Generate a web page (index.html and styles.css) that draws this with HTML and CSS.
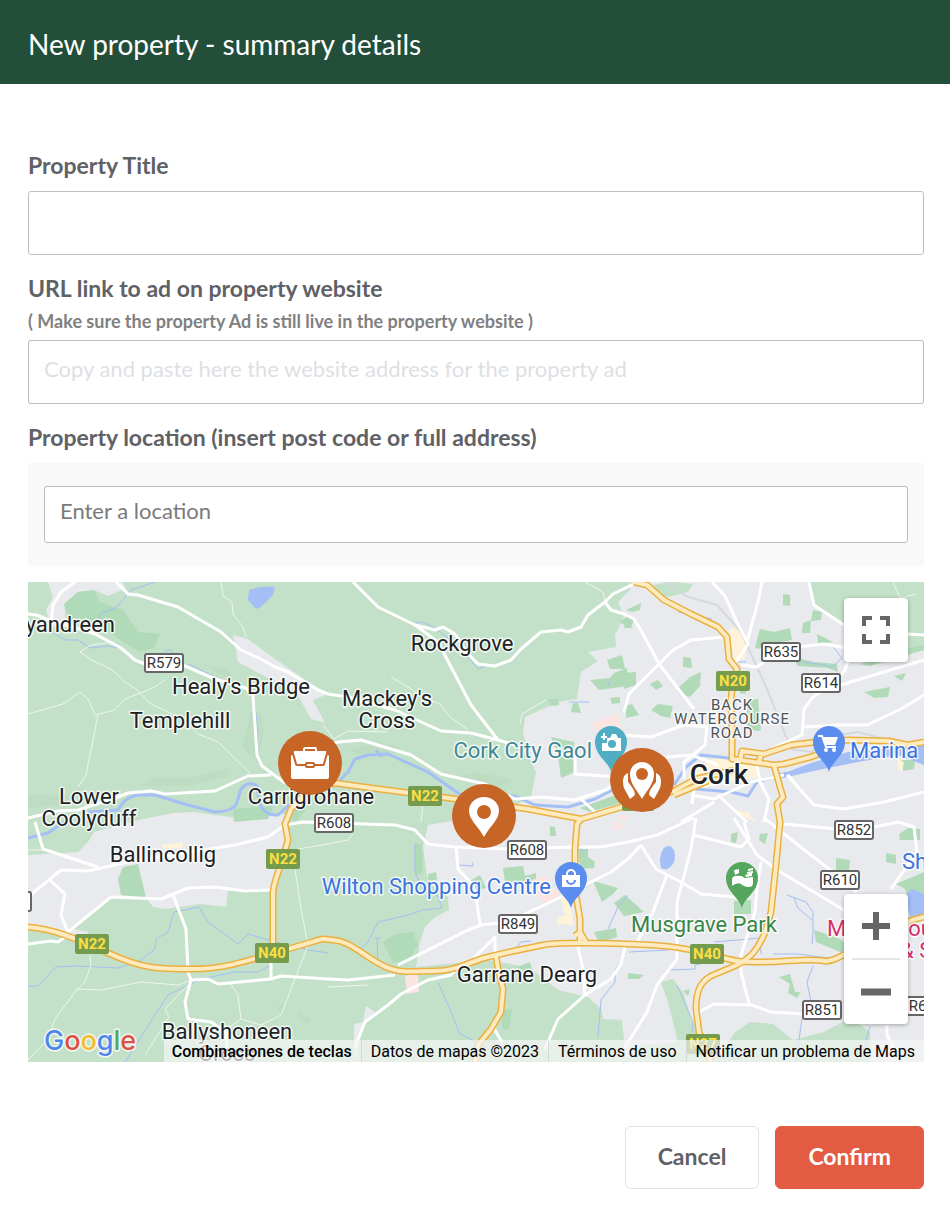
FILE: index.html
```html
<!DOCTYPE html>
<html lang="en">
<head>
  <meta charset="UTF-8">
  <meta name="viewport" content="width=device-width, initial-scale=1">
  <title>New property - summary details</title>
  <link rel="stylesheet" href="styles.css">
</head>
<body>
  <header class="header">
    <h1 class="title">New property - summary details</h1>
  </header>

  <form class="form">
    <div class="field">
      <label class="label" for="propertyTitle">Property Title</label>
      <input class="input" type="text" id="propertyTitle">
    </div>

    <div class="field">
      <label class="label label-hinted" for="propertyUrl">URL link to ad on property website</label>
      <p class="hint" id="urlHint">( Make sure the property Ad is still live in the property website )</p>
      <input class="input" type="text" id="propertyUrl" aria-describedby="urlHint" placeholder="Copy and paste here the website address for the property ad">
    </div>

    <div class="field">
      <label class="label" for="location">Property location (insert post code or full address)</label>
      <div class="location-box">
        <input class="input input-location" type="text" id="location" placeholder="Enter a location">
      </div>
    </div>

    <div class="map">
      <svg class="map-canvas" viewBox="0 0 896 480" preserveAspectRatio="xMidYMid slice">
        <defs>
          <path id="pin" d="M0 30C-2 20-16 14-16 0A16 16 0 0 1 16 0C16 14 2 20 0 30Z"/>
          <!-- main roads are stroked twice: casing, then fill -->
          <g id="highways">
            <path d="M0 345C25 347 45 355 80 371S130 387 163 387S215 380 260 367S290 357 305 358S330 369 350 381S385 389 407 389S440 380 460 375S500 366 515 363S570 361 600 362S650 364 680 372S710 380 735 380S780 376 796 379S850 345 896 335"/>
            <path d="M245 370L245 310C246 300 250 290 254 280L260 258L257 242L263 227L280 208L307 201L343 206L413 215L500 227L553 237L567 233L600 223L646 209L668 197L706 188"/>
            <path d="M553 237L549 242L547 267L547 307L552 337L552 361M547 354L552 350L558 360"/>
            <path d="M468 374L470 387L475 407L473 430L463 447L450 463L447 480"/>
            <path d="M606 0L619 3L636 18L663 32L690 45L699 55L701 77L709 87L705 100L703 117L704 147L704 177L746 183L756 182L783 175L800 168"/>
            <path d="M706 180L712 178L714 169L736 172L763 163L789 160L821 158L861 159L880 163L896 160M730 182L734 171M646 213L680 199"/>
            <path d="M746 183L752 205L755 215L749 222L752 240L748 283L743 330L736 353C728 370 722 376 709 383L683 394C672 400 668 410 668 427L671 450L683 480"/>
          </g>
        </defs>

        <!-- land -->
        <rect class="land" width="896" height="480"/>
        <g class="urban">
          <path d="M20 0L25 15L18 28L24 45L38 40L36 22L50 10L66 8L80 14L98 6L94 0Z"/>
          <path d="M205 53L220 57L240 72L276 97L300 112L285 118L297 141L283 137L268 110L232 92L210 80Z"/>
          <path d="M0 273L50 270L60 260L66 250L110 238L145 231L165 230L210 236L250 232L262 232L258 260L251 285L243 307L200 309L198 325L173 322L137 327L125 325L118 316L83 315L45 347L60 350L57 358L35 355L0 344Z"/>
          <path d="M600 10L590 20L596 35L587 53L588 65L560 70L570 79L553 90L549 117L530 120L497 135L495 150L500 172L508 190L503 215L490 222L440 236L400 243L395 265L400 300L420 315L421 328L407 335L397 345L392 360L388 385L460 378L500 385L530 408L560 415L573 427L575 437L594 438L598 480L896 480L896 0L606 0Z"/>
          <path d="M338 424L347 430L332 450L330 470L326 480L326 442L335 440Z"/>
        </g>
        <g class="land">
          <path d="M781 0L786 23L816 43L830 62L896 66L896 0Z"/>
          <path d="M617 4L645 0L665 2L660 10L636 16Z"/>
          <path d="M633 400L645 397L656 412L664 440L700 480L596 480L612 463L650 460L640 420Z"/>
          <path d="M690 480L706 451L722 440L745 442L765 458L796 450L822 436L842 450L842 480Z"/>
        </g>
        <g class="park">
          <path d="M36 22L50 10L66 8L72 20L95 28L110 50L132 52L126 66L112 70L95 60L78 48L42 38Z"/>
          <path d="M90 297L95 285L110 282L118 316L93 313Z"/>
          <path d="M205 227L245 224L240 237L206 240ZM258 210L270 225L280 225L268 240L262 236Z"/>
          <path d="M355 360L367 352L385 350L390 363L382 377L365 381ZM400 292L408 290L409 298L400 299ZM386 262L394 262L395 290L387 294ZM440 300L452 293L458 306L447 308ZM475 286L495 284L497 294L508 291L508 300L477 300ZM550 267L560 267L560 275L567 280L566 286L552 287ZM470 243L474 245L472 255L466 253ZM522 244L527 245L528 254L522 254Z"/>
          <path d="M565 299L590 306L585 312L574 320ZM586 321L597 313L616 330L596 334ZM566 350L588 346L589 355L571 361ZM502 380L504 388L487 386ZM474 428L484 427L481 447L474 447Z"/>
          <path d="M579 78L594 73L597 87L582 87ZM562 98L582 96L586 91L599 86L600 104L571 108ZM520 117L530 117L531 123L523 124ZM545 121L550 121L553 131L543 130ZM582 116L592 115L592 121L584 122ZM523 155L546 160L547 190L533 196L530 173ZM552 226L596 210L600 219L562 230ZM591 40L600 34L604 47Z"/>
          <path d="M598 34L606 37L603 46L596 46ZM598 28L613 21L612 28L604 30ZM596 91L608 90L608 103L596 107ZM598 124L604 122L611 133L598 136ZM650 106L662 95L673 90L672 104L662 115L652 112ZM655 75L663 76L664 86L655 85ZM622 102L630 98L635 104L628 108ZM623 128L630 122L645 124L642 136L633 134ZM755 12L762 13L762 24L755 23ZM727 65L732 47L746 50L762 46L764 58L740 63L730 67ZM775 41L783 38L782 51L774 51ZM785 28L794 30L793 38L783 39Z"/>
          <path d="M764 75L786 80L809 82L810 90L800 86L770 84ZM832 82L846 78L848 72L896 63L896 68L842 84ZM789 52L805 60L790 62ZM836 110L862 105L860 115L846 116ZM866 94L878 91L874 99ZM712 100L717 98L718 112L712 111ZM719 118L730 117L733 149L719 148ZM874 178L887 178L886 187L875 189Z"/>
          <path d="M703 252L710 250L708 261L703 260ZM732 252L740 251L737 262L731 258ZM808 276L822 278L821 289L808 288ZM858 271L868 273L868 282L858 280ZM871 252L880 246L892 247L892 258L872 258ZM706 319L723 318L723 332L706 332ZM596 313L612 330L596 334ZM786 348L810 356L822 364L822 374L788 360ZM868 302L896 290L896 320L882 320L877 307ZM751 395L762 392L767 410L773 410L769 416L760 411L762 402ZM600 391L616 393L611 397L600 397ZM655 409L662 407L660 414Z"/>
        </g>
        <g class="shade">
          <path d="M0 212L40 214L40 222L0 226ZM110 204L130 195L165 195L200 187L200 194L160 204ZM180 83L200 88L205 96L190 92ZM223 130L232 130L236 150L232 168L226 178L214 165ZM320 168L350 160L372 165L360 175L330 172ZM420 196L450 190L485 198L470 205L440 200ZM250 425L256 421L255 427L249 430ZM270 430L284 438L280 442L269 435Z"/>
        </g>
        <g class="medical">
          <path d="M563 142L590 131L593 148L576 156ZM377 394L390 391L391 410L379 412ZM504 298L518 293L520 305L533 310L524 322L514 320ZM588 235L600 233L598 240ZM585 240L592 240L597 247L585 248Z"/>
        </g>
        <g class="district">
          <path d="M701 48L709 44L720 62L716 77L706 80ZM668 184L690 175L730 185L728 196L700 200L668 208L660 198ZM134 263L155 260L155 266L135 267ZM533 315L541 316L546 343L529 342L529 335L537 334ZM706 228L720 230L728 240L715 234ZM869 177L876 180L874 190L870 186Z"/>
        </g>

        <!-- water -->
        <path class="lake" d="M221 8Q234 3 247 5L245 13L233 25L228 27L220 18ZM632 279Q633 263 642 264Q649 268 646 280Q641 290 633 286ZM746 195L783 181L820 170L896 163L896 183L870 173L830 180L790 188L746 198ZM878 312L884 307L896 312L896 332L882 335L880 326Z"/>
        <g class="river">
          <path d="M60 230L90 228Q98 214 110 213L127 213L160 223L187 230Q207 229 209 220L213 207Q220 198 229 204L231 220Q236 234 250 233L262 222"/>
          <path d="M310 200L320 190L327 177L340 173L360 172L380 181L400 190L420 204L433 213L460 215L487 214L507 223L540 225L567 217L596 202M348 168L353 175M0 256L20 251L36 240"/>
          <path d="M646 203L658 185L673 173L700 176L732 180"/>
          <path d="M668 207L703 210L720 214L729 200L759 191"/>
        </g>
        <g class="stream">
          <path d="M23 50L38 58L50 58L62 66L80 64L92 66M127 0L103 8L88 26L72 32L68 45M136 72Q140 64 146 71M225 112L229 140L230 180L245 193M187 95L160 82"/>
          <path d="M0 404L10 404L28 385L47 384L90 386L110 380L127 367L128 357L140 350L146 330L171 325L180 340L210 362L220 352L240 358L280 368L300 371"/>
          <path d="M97 480L127 433L140 413L173 397L207 390L230 390L243 383"/>
          <path d="M387 41L395 40L407 46L420 56L430 67M440 75L450 87L458 84M410 400L421 425L432 452L452 462M330 370L340 360L350 340L380 333L395 328L414 326L410 314L395 307L387 290L387 262M346 356L353 356M349 356L350 385M431 283L445 284L444 280"/>
          <path d="M580 99L582 105M541 120L561 120M485 370L493 360L503 359M596 376L587 388L587 400L573 418L570 455M556 272L547 255M600 313L590 325L580 347"/>
          <path d="M622 3L633 16M650 30L684 37M708 80L718 80M805 65L814 76L804 85L797 83L774 80M759 313L778 320L785 330L785 350L784 362M766 316L770 326L784 338M640 388L667 387L667 383L690 378M649 403L665 440L664 450M745 372L770 372L800 376L815 372M785 384L779 400L783 420L774 436L768 480M842 444L835 470M601 370L640 368M686 360L732 356L733 372"/>
        </g>

        <!-- lanes -->
        <g class="lane">
          <path d="M87 60L63 63L52 70L63 78L83 87L97 100L108 107L123 122L150 135L170 152L190 160L223 192"/>
          <path d="M0 132L35 122L52 110L60 117L67 133L87 128L97 117L127 105L138 97M70 133L58 193L50 205M193 0L195 14L204 20L205 32L215 45L218 55"/>
          <path d="M363 95L400 117L412 122L422 135L440 148M492 142L494 132L518 118M306 157L320 149L360 150M557 0L575 10L577 20M295 143L306 157"/>
          <path d="M62 373L63 383L57 400L47 410L27 437L20 457L0 478M47 407L73 408L113 400L150 403L163 398M203 402L210 413L213 437L233 443L253 433L267 397L280 363L273 327L267 287L260 274M160 403L137 427L141 435L117 473M270 267L300 262L320 258L325 252M300 405L340 403M393 240L395 222M0 268L15 268M865 0L872 16L888 12"/>
          <path d="M213 437L195 450L190 475"/>
        </g>

        <!-- railway -->
        <path class="rail" d="M636 0L660 15L689 23L713 50L739 107L763 167L783 170L800 155L830 150L860 158"/>

        <!-- streets -->
        <g class="street">
          <path d="M0 32L8 33L22 38L67 52L93 66L107 78L117 82L157 84L187 97L218 106L225 113L229 173L234 184L257 201M23 43L25 23L33 10L47 0"/>
          <path d="M88 0L100 12L110 13L150 25L193 50L213 68L233 77L245 84L260 90L290 108L300 112L320 115L367 128L413 149L443 151L470 158L487 163M325 0L350 25L387 43L410 60L443 123L470 158"/>
          <path d="M387 43L407 48L415 45L427 52L440 72L450 82L467 84L483 78L493 67L513 50L533 48L540 50L553 45L560 33L577 20L585 12L610 0M577 20L583 28L596 32L606 37L614 50L631 82L666 127"/>
          <path d="M300 163L310 160L333 158L383 173L413 192L457 202L487 217L513 215L547 218L580 207L590 195L547 192L547 173L530 172M553 217L567 230M310 200L300 190L300 163"/>
          <path d="M0 236L30 229L50 228L90 215L100 211L123 209L137 212L187 209L220 194L243 193M7 240L15 267L70 285M0 315L33 288L60 289L100 280L150 272L207 263L240 255L257 243L275 240L367 243L387 248L400 262L427 265L480 267L547 265L573 265L600 260L629 253L666 236"/>
          <path d="M22 298L37 312L33 333L40 350L83 315L133 317L160 306L187 305L217 309L243 308M145 313L158 347L160 390L163 398L157 420L160 437L183 440L198 450L200 480M163 398L180 397L190 402L243 397L253 394L300 397L320 398L367 393M243 375L243 397M0 362L23 359L30 360L40 353"/>
          <path d="M327 465L337 440L360 423L373 412L400 398L423 393L433 383M370 383L440 348L453 343L480 340L533 315L557 303L583 290L600 277L613 263M428 265L430 287L445 303L448 315L452 342M440 382L447 375L467 355L467 373M550 365L555 387L557 413L530 437L517 467M557 413L583 397L593 382L597 365M465 445L474 460"/>
          <path d="M613 263L628 287L639 293L653 300L673 312L709 315M639 293L625 330L608 362M668 236L663 267L649 320L649 363L649 377L629 403L619 430L596 467M666 253L713 265L721 257L716 240M706 236L729 273L749 288L816 328M736 236L779 270L809 293L829 310"/>
          <path d="M756 242L809 247L846 245L870 240L886 245L889 270L863 307M733 280L729 307L727 330L713 373L713 390L721 422L743 430L776 432M671 430L686 422L722 423M859 443L859 453L866 467"/>
          <path d="M684 0L697 14L709 40L720 62L706 83M734 0L730 20L719 60M596 130L601 112L613 100L631 82L645 68L663 58L696 55M596 153L623 155L656 143L679 145L677 163L656 180L656 197M713 83L729 85L753 67L796 62L829 68"/>
          <path d="M823 73L816 90L800 105L785 115L776 127L774 153L743 167M781 0L786 23L816 43M879 52L896 53M806 105L896 78M776 145L809 143L839 143L873 127L896 113"/>
          <path d="M729 183L732 200L741 217L736 240M759 193L786 223L816 227L856 220L896 210M663 213L686 217L723 200L756 193M690 213L719 240M653 240L686 220M620 178L640 175L663 173L690 183M664 222L666 205L700 200M760 193L770 205"/>
        </g>

        <use href="#highways" class="highway-casing"/>
        <use href="#highways" class="highway"/>

        <!-- road numbers -->
        <g class="shield">
          <g transform="translate(136 81)"><rect x="-19" y="-9" width="38" height="18" rx="2"/><text y="5">R579</text></g>
          <g transform="translate(306 241)"><rect x="-19" y="-9" width="38" height="18" rx="2"/><text y="5">R608</text></g>
          <g transform="translate(499 268)"><rect x="-19" y="-9" width="38" height="18" rx="2"/><text y="5">R608</text></g>
          <g transform="translate(490 342)"><rect x="-19" y="-9" width="38" height="18" rx="2"/><text y="5">R849</text></g>
          <g transform="translate(753 70)"><rect x="-19" y="-9" width="38" height="18" rx="2"/><text y="5">R635</text></g>
          <g transform="translate(793 101)"><rect x="-19" y="-9" width="38" height="18" rx="2"/><text y="5">R614</text></g>
          <g transform="translate(826 248)"><rect x="-19" y="-9" width="38" height="18" rx="2"/><text y="5">R852</text></g>
          <g transform="translate(812 298)"><rect x="-19" y="-9" width="38" height="18" rx="2"/><text y="5">R610</text></g>
          <g transform="translate(794 428)"><rect x="-19" y="-9" width="38" height="18" rx="2"/><text y="5">R851</text></g>
          <g transform="translate(898 424)"><rect x="-19" y="-9" width="38" height="18" rx="2"/><text y="5">R610</text></g>
          <rect x="-35" y="310" width="38" height="19" rx="2"/>
        </g>
        <g class="shield-national">
          <g transform="translate(397 214)"><rect x="-17" y="-10" width="34" height="20" rx="2"/><text y="5">N22</text></g>
          <g transform="translate(705 99)"><rect x="-17" y="-10" width="34" height="20" rx="2"/><text y="5">N20</text></g>
          <g transform="translate(255 277)"><rect x="-17" y="-10" width="34" height="20" rx="2"/><text y="5">N22</text></g>
          <g transform="translate(64 362)"><rect x="-17" y="-10" width="34" height="20" rx="2"/><text y="5">N22</text></g>
          <g transform="translate(244 371)"><rect x="-17" y="-10" width="34" height="20" rx="2"/><text y="5">N40</text></g>
          <g transform="translate(679 372)"><rect x="-17" y="-10" width="34" height="20" rx="2"/><text y="5">N40</text></g>
          <g transform="translate(675 462)"><rect x="-17" y="-10" width="34" height="20" rx="2"/><text y="5">N27</text></g>
          <rect x="594" y="209" width="32" height="20" rx="2"/>
        </g>

        <!-- places -->
        <g class="place">
          <text x="87" y="50" text-anchor="end">yandreen</text>
          <text x="434" y="69">Rockgrove</text>
          <text x="213" y="112">Healy's Bridge</text>
          <text x="152" y="146">Templehill</text>
          <text x="359" y="124">Mackey's</text>
          <text x="359" y="146">Cross</text>
          <text x="61" y="222">Lower</text>
          <text x="61" y="244">Coolyduff</text>
          <text x="283" y="222">Carrigrohane</text>
          <text x="135" y="280">Ballincollig</text>
          <text x="499" y="400">Garrane Dearg</text>
          <text x="199" y="457">Ballyshoneen</text>
          <text x="199" y="479">Cross</text>
        </g>
        <g class="poi">
          <text class="poi-sight" x="564" y="176" text-anchor="end">Cork City Gaol</text>
          <text class="poi-shop" x="523" y="312" text-anchor="end">Wilton Shopping Centre</text>
          <text class="poi-shop" x="822" y="176">Marina</text>
          <text class="poi-shop" x="874" y="287">Sh</text>
          <text class="poi-park" x="676" y="350" text-anchor="middle">Musgrave Park</text>
          <text class="poi-hotel" x="799" y="354">M</text>
          <text class="poi-hotel" x="873" y="354">rou</text>
          <text class="poi-hotel" x="872" y="376">&amp; S</text>
        </g>
        <g class="quarter">
          <text x="704" y="128">BACK</text>
          <text x="704" y="142">WATERCOURSE</text>
          <text x="704" y="156">ROAD</text>
        </g>
        <text class="city" x="691" y="202">Cork</text>

        <!-- pins -->
        <g transform="translate(583 160)">
          <use href="#pin" class="pin-sight"/>
          <path class="glyph" d="M-4-4H-1L1-8H5L7-4H10V9H-9V1H-4ZM-8-9H-6V-6H-4V-4H-6V-2H-8V-4H-10V-6H-8Z"/>
          <circle class="pin-sight" cx="1" cy="2" r="4"/>
        </g>
        <g transform="translate(543 296)">
          <use href="#pin" class="pin-shop"/>
          <path class="glyph" d="M-9-3H9V9H-9Z"/>
          <path class="glyph-line" d="M-4-3V-4A4 4 0 0 1 4-4V-3"/>
          <path class="glyph-cut" d="M-4 2A4 4 0 0 0 4 2"/>
        </g>
        <g transform="translate(801 160)">
          <use href="#pin" class="pin-shop"/>
          <path class="glyph-line" d="M-11-6H-7L-3 5H7"/>
          <path class="glyph" d="M-6-5H9L6 3H-3Z"/>
          <circle class="glyph" cx="-3" cy="8" r="2"/><circle class="glyph" cx="5" cy="8" r="2"/>
        </g>
        <g transform="translate(714 296)">
          <use href="#pin" class="pin-park"/>
          <path class="glyph" d="M-10 2Q-10-2-6-2Q-1-3 3 0L11-1V5Q11 9 7 9Q2 9-1 6Q-5 4-10 8ZM-8-8L-3-9V-5L-7-3ZM6-9L11-10V-8L6-7ZM5-6L11-7V-5L5-4ZM3-3L10-5V-2L4-1Z"/>
        </g>

        <!-- amenity markers -->
        <g transform="translate(282 181)">
          <circle class="marker" r="32"/>
          <path class="glyph" d="M-16-12H16L18-7L19-8V14Q19 16 17 16H-17Q-19 16-19 14V-8L-18-7Z"/>
          <path class="glyph-line" d="M-6-12V-14Q-6-15-5-15H5Q6-15 6-14V-12"/>
          <path class="marker-line" d="M-18-13L-14 1Q-14 2-13 2H-5M5 2H13Q14 2 14 1L18-13"/>
          <rect class="marker-line" x="-4" y="0" width="8" height="4" rx="1"/>
        </g>
        <g transform="translate(456 234)">
          <circle class="marker" r="32"/>
          <path class="glyph" d="M0 21C-5 11-15 4-15-5A15 14 0 0 1 15-5C15 4 5 11 0 21Z"/>
          <circle class="marker" cy="-4" r="7"/>
        </g>
        <g transform="translate(614 198)">
          <circle class="marker" r="32"/>
          <path class="glyph" d="M-14-7Q-19-5-19 1Q-19 7-17 10L-12 19L-7 15L-8 9L-14 2ZM14-7Q19-5 19 1Q19 7 17 10L12 19L7 15L8 9L14 2Z"/>
          <path class="glyph glyph-ringed" d="M0 19C-5 10-12 4-12-6A12 12 0 0 1 12-6C12 4 5 10 0 19Z"/>
          <circle class="marker" cy="-6" r="6"/>
        </g>

        <text class="google" x="16" y="468"><tspan class="g-blue">G</tspan><tspan class="g-red">o</tspan><tspan class="g-yellow">o</tspan><tspan class="g-blue">g</tspan><tspan class="g-green">l</tspan><tspan class="g-red">e</tspan></text>
      </svg>

      <button class="map-button fullscreen" type="button" aria-label="Toggle fullscreen view">
        <svg width="28" height="28" viewBox="0 0 28 28"><path d="M2 10V2H10M18 2H26V10M26 18V26H18M10 26H2V18" fill="none" stroke="#666" stroke-width="4"/></svg>
      </button>

      <div class="zoom">
        <button class="zoom-button" type="button" aria-label="Zoom in">
          <svg width="30" height="30" viewBox="0 0 30 30"><path d="M1 15H29M15 1V29" fill="none" stroke="#666" stroke-width="6"/></svg>
        </button>
        <button class="zoom-button" type="button" aria-label="Zoom out">
          <svg width="30" height="30" viewBox="0 0 30 30"><path d="M0 15H30" fill="none" stroke="#666" stroke-width="7"/></svg>
        </button>
      </div>

      <div class="attribution">
        <button class="attribution-item shortcuts" type="button">Combinaciones de teclas</button>
        <span class="attribution-item">Datos de mapas ©2023</span>
        <a class="attribution-item" href="#terms">Términos de uso</a>
        <a class="attribution-item" href="#report">Notificar un problema de Maps</a>
      </div>
    </div>

    <div class="actions">
      <button class="button button-cancel" type="button">Cancel</button>
      <button class="button button-confirm" type="submit">Confirm</button>
    </div>
  </form>
</body>
</html>
```

FILE: styles.css
```css
* {
  box-sizing: border-box;
}
body {
  margin: 0;
  background: #fff;
  color: #5f6166;
  font-family: Lato, 'Open Sans', sans-serif;
}
.header {
  padding: 26px 28px 22px;
  background: #234e3a;
}
.title {
  margin: 0;
  color: #fff;
  font-size: 28px;
  font-weight: 400;
  line-height: 36px;
}
.form {
  padding: 66px 26px 31px 28px;
}
.field {
  display: flex;
  flex-direction: column;
  margin-bottom: 18px;
}
.label {
  margin-bottom: 11px;
  font-size: 23px;
  font-weight: 700;
  line-height: 30px;
}
.label-hinted {
  margin-bottom: 7px;
}
.hint {
  margin: 0 0 8px;
  color: #808080;
  font-size: 18px;
  font-weight: 700;
  line-height: 22px;
}
.input {
  width: 100%;
  height: 64px;
  padding: 0 15px 8px;
  border: 1px solid #bdbdbf;
  border-radius: 3px;
  background: #fff;
  color: #5f6166;
  font: inherit;
  font-size: 22px;
}
.input::placeholder {
  color: #dedfe4;
  opacity: 1;
}
.location-box {
  padding: 23px 16px;
  background: #f9f9f9;
}
.input-location {
  display: block;
  height: 57px;
}
.input-location::placeholder {
  color: #7a7a7a;
}

/* map */
.map {
  position: relative;
  height: 480px;
  margin-top: -2px;
  overflow: hidden;
  font-family: Roboto, sans-serif;
}
.map-canvas {
  display: block;
  width: 100%;
  height: 100%;
}
.land {
  fill: #c3e1c8;
}
.urban {
  fill: #e8eaed;
}
.park {
  fill: #b1dab9;
}
.shade {
  fill: #bddcc2;
}
.medical {
  fill: #fae5e3;
}
.district {
  fill: #fef3d9;
}
.lake {
  fill: #a3bff5;
}
.river, .stream, .lane, .street, .rail, .highway, .highway-casing {
  fill: none;
  stroke-linejoin: round;
}
.river {
  stroke: #a3bff5;
  stroke-width: 3;
}
.stream {
  stroke: #a3bff5;
  stroke-width: 1;
}
.lane {
  stroke: #edf5ee;
  stroke-width: 1;
}
.rail {
  stroke: #d6d8dc;
  stroke-width: 2;
}
.street {
  stroke: #fff;
  stroke-width: 3;
}
.highway-casing {
  stroke: #eab040;
  stroke-width: 7;
}
.highway {
  stroke: #fdebbf;
  stroke-width: 4;
}
.shield rect {
  fill: #fff;
  stroke: #666;
  stroke-width: 2;
}
.shield text, .shield-national text {
  fill: #333;
  font-size: 15px;
  text-anchor: middle;
}
.shield-national rect {
  fill: #759c4c;
}
.shield-national text {
  fill: #fbdf45;
  font-weight: 700;
}
.place text, .poi text, .quarter text, .city, .google {
  paint-order: stroke;
  stroke: #fff;
  stroke-width: 3;
  stroke-linejoin: round;
  stroke-opacity: 0.8;
}
.place text {
  fill: #202124;
  font-size: 22px;
  text-anchor: middle;
}
.place text[text-anchor="end"] {
  text-anchor: end;
}
.poi text {
  font-size: 22px;
}
.poi .poi-sight {
  fill: #3f8894;
}
.poi .poi-shop {
  fill: #3b74de;
}
.poi .poi-park {
  fill: #398645;
}
.poi .poi-hotel {
  fill: #d62f6b;
}
.quarter text {
  fill: #505357;
  font-size: 15px;
  letter-spacing: 1px;
  text-anchor: middle;
}
.city {
  fill: #202124;
  font-size: 28px;
  font-weight: 500;
  text-anchor: middle;
}
.pin-sight {
  fill: #4faec4;
}
.pin-shop {
  fill: #5b8def;
}
.pin-park {
  fill: #54a65c;
}
.glyph {
  fill: #fff;
}
.glyph-line {
  fill: none;
  stroke: #fff;
  stroke-width: 2;
}
.glyph-cut {
  fill: none;
  stroke: #5b8def;
  stroke-width: 2;
}
.glyph-ringed {
  paint-order: stroke;
  stroke: #c76527;
  stroke-width: 4;
}
.marker {
  fill: #c76527;
}
.marker-line {
  fill: none;
  stroke: #c76527;
  stroke-width: 2;
}
.google {
  font-family: Inter, sans-serif;
  font-size: 27px;
  font-weight: 500;
}
.g-blue {
  fill: #4f86ec;
}
.g-red {
  fill: #dd5144;
}
.g-yellow {
  fill: #f3bb31;
}
.g-green {
  fill: #58a55c;
}

/* map controls */
.map-button, .zoom {
  position: absolute;
  right: 16px;
  width: 64px;
  border: 0;
  border-radius: 4px;
  background: #fff;
  box-shadow: 0 1px 4px rgba(0, 0, 0, 0.3);
}
.map-button {
  display: grid;
  place-items: center;
  padding: 0;
}
.fullscreen {
  top: 16px;
  height: 64px;
}
.zoom {
  bottom: 38px;
}
.zoom-button {
  display: grid;
  place-items: center;
  width: 48px;
  height: 64px;
  margin: 0 auto;
  padding: 0;
  border: 0;
  background: none;
}
.zoom-button + .zoom-button {
  height: 66px;
  border-top: 2px solid #e6e6e6;
}
.attribution {
  position: absolute;
  right: 0;
  bottom: 0;
  display: flex;
  background: rgba(245, 245, 245, 0.7);
}
.attribution-item {
  padding: 1px 9px 0;
  border: 0;
  border-left: 1px solid #d5dad6;
  background: none;
  color: #000;
  font: 400 16px/21px Roboto, sans-serif;
  text-decoration: none;
  white-space: nowrap;
}
.shortcuts {
  padding-left: 8px;
  border-left: 0;
  font-weight: 500;
}

/* footer buttons */
.actions {
  display: flex;
  justify-content: flex-end;
  gap: 16px;
  margin-top: 64px;
}
.button {
  height: 63px;
  padding: 0 32px 4px;
  border: 1px solid #dfe0e8;
  border-radius: 6px;
  font: inherit;
  font-size: 23px;
  font-weight: 700;
}
.button-cancel {
  background: #fff;
  color: #5f6166;
}
.button-confirm {
  border-color: #e45b43;
  background: #e45b43;
  color: #fff;
}
```
